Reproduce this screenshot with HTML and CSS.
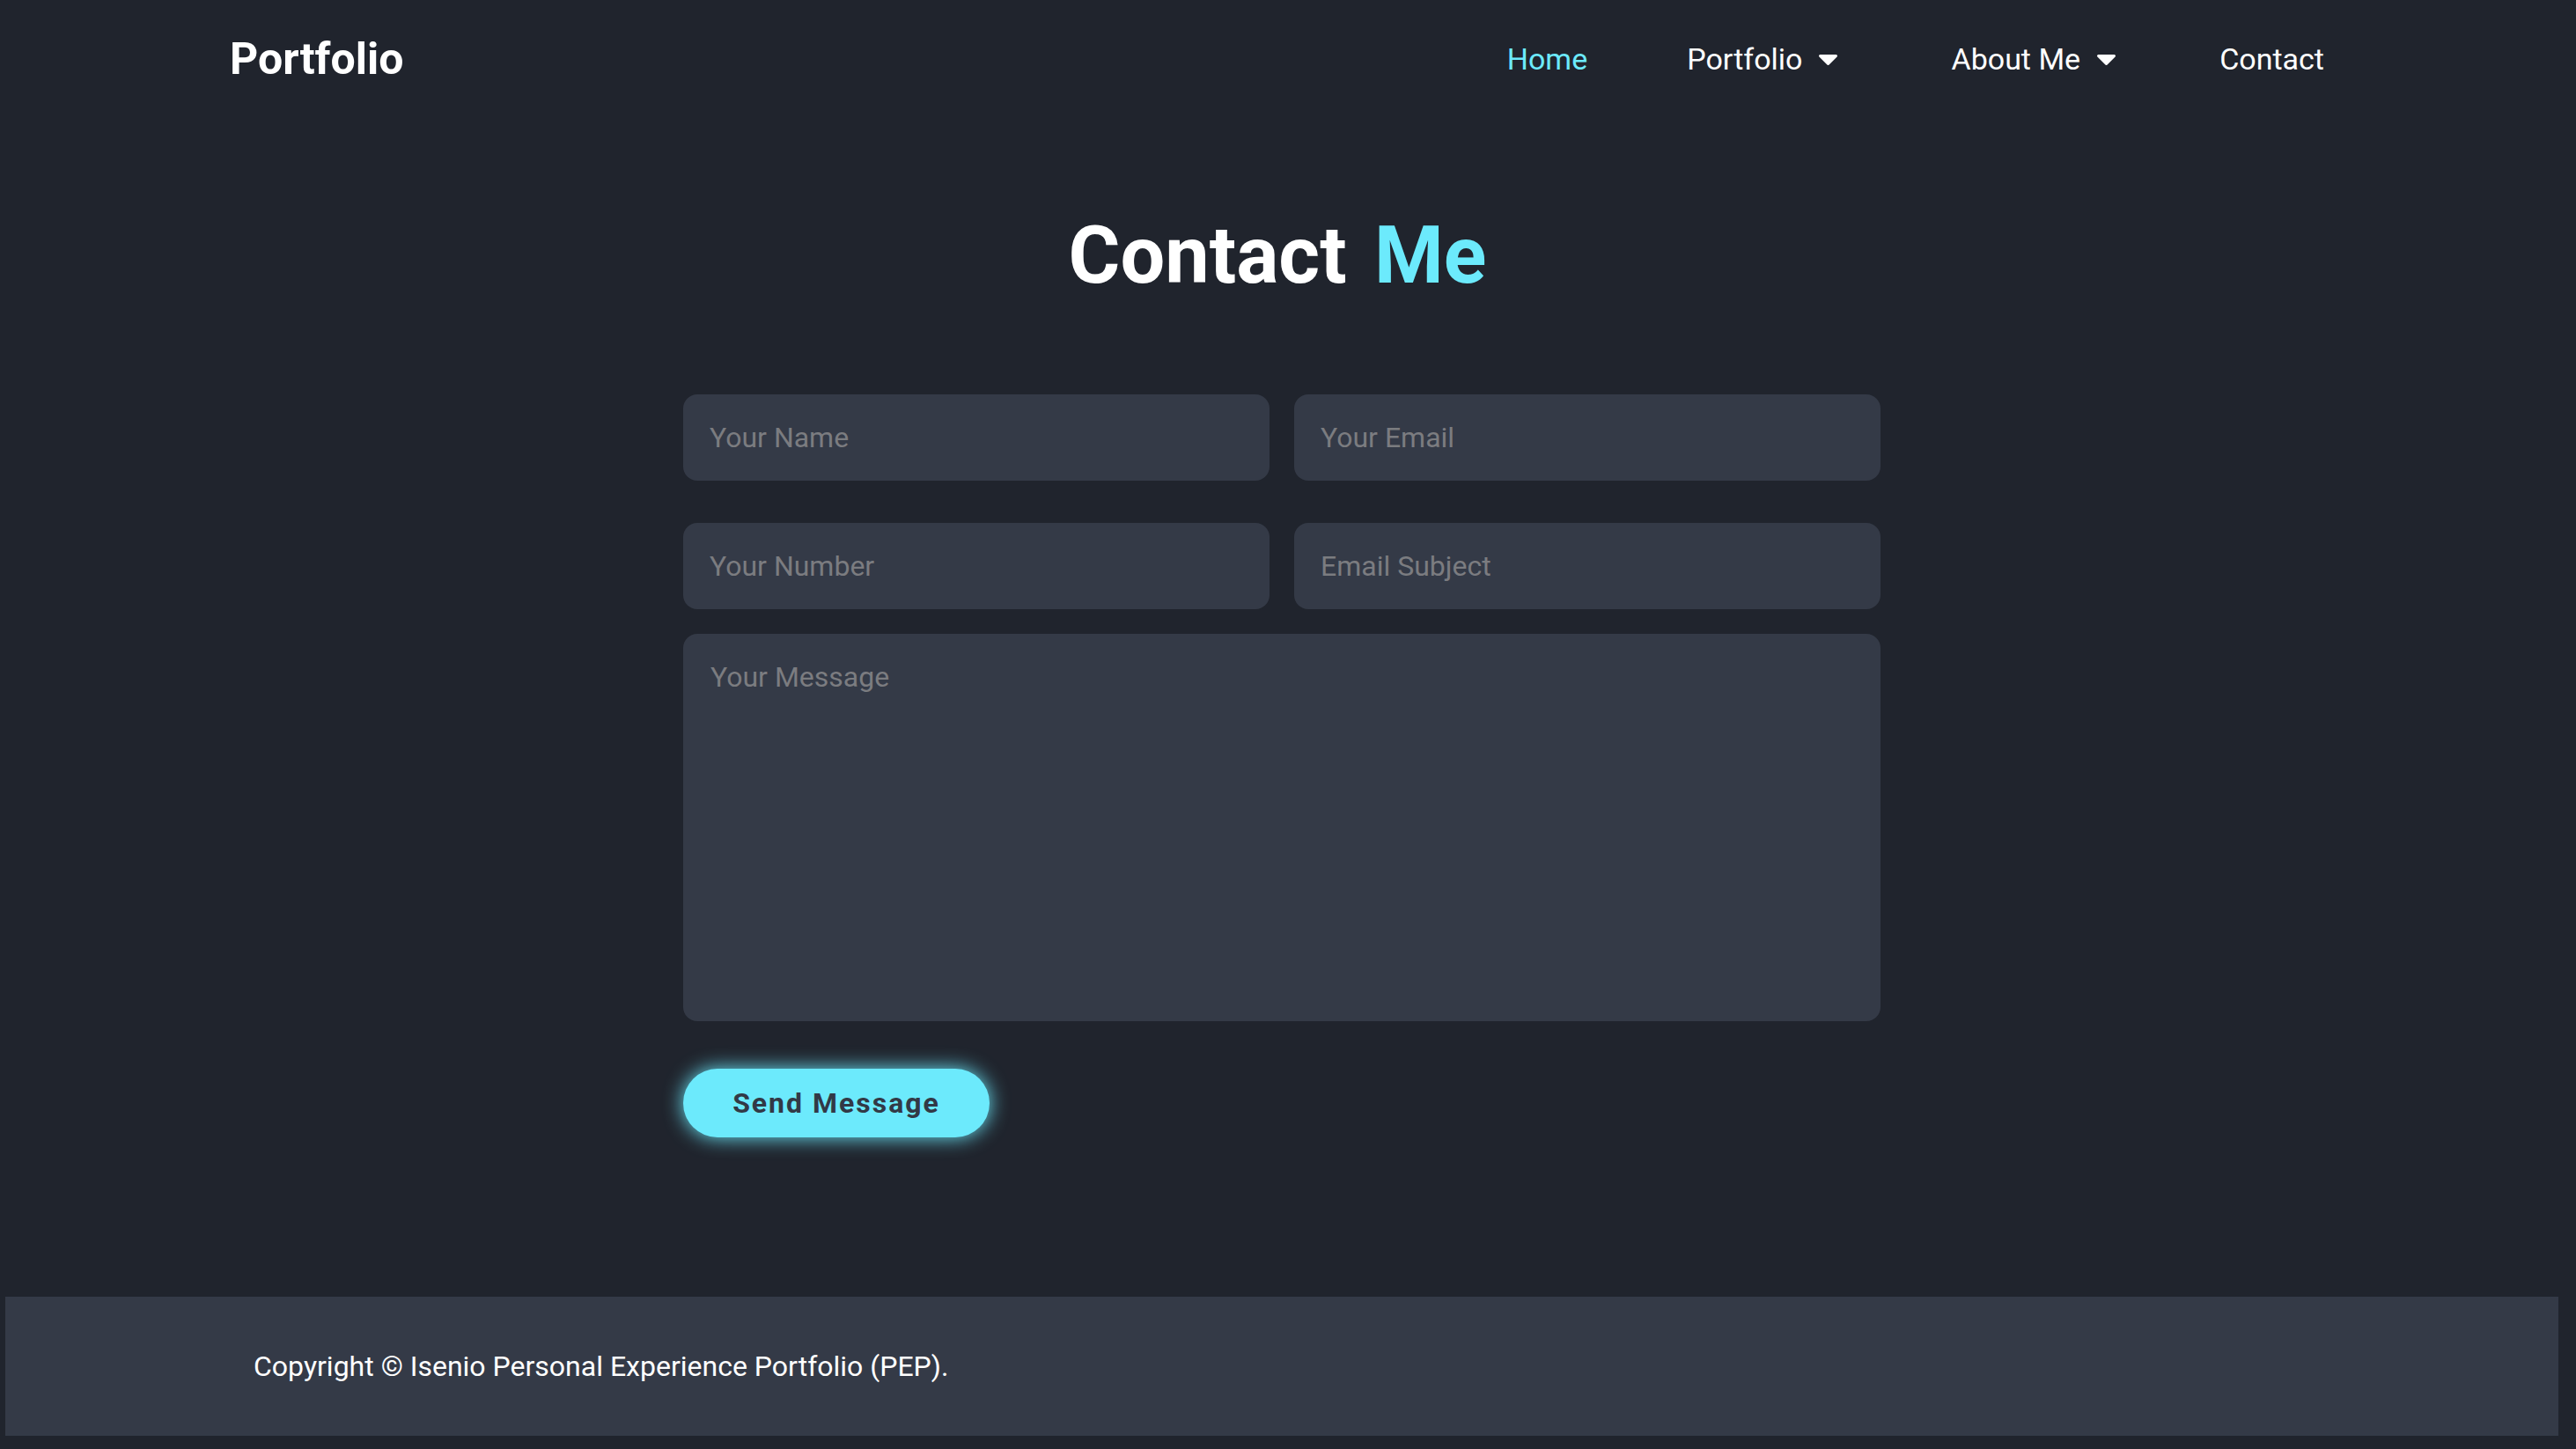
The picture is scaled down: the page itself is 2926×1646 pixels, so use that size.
FILE: index.html
```html
<!DOCTYPE html>
<html lang="en">
<head>
    <meta charset="UTF-8">
    <meta name="viewport" content="width=device-width, initial-scale=1.0">
    <title>Portfolio - Contact</title>
    <link rel="stylesheet" href="styles.css">
</head>
<body>
    <header class="header">
        <a href="#" class="logo">Portfolio</a>

        <nav class="navbar">
            <a href="#" class="nav-link active">Home</a>
            <a href="#" class="nav-link dropdown">Portfolio
                <svg class="caret" viewBox="0 0 21 12"><path d="M1.5 0h18a1.5 1.5 0 0 1 1.1 2.5l-9 9a1.5 1.5 0 0 1-2.2 0l-9-9A1.5 1.5 0 0 1 1.5 0z"/></svg>
            </a>
            <a href="#" class="nav-link dropdown">About Me
                <svg class="caret" viewBox="0 0 21 12"><path d="M1.5 0h18a1.5 1.5 0 0 1 1.1 2.5l-9 9a1.5 1.5 0 0 1-2.2 0l-9-9A1.5 1.5 0 0 1 1.5 0z"/></svg>
            </a>
            <a href="#" class="nav-link last">Contact</a>
        </nav>
    </header>

    <main class="contact">
        <h2 class="heading">Contact <span>Me</span></h2>

        <form action="#" class="contact-form">
            <div class="input-box first">
                <input type="text" placeholder="Your Name">
                <input type="email" placeholder="Your Email">
            </div>
            <div class="input-box">
                <input type="number" placeholder="Your Number">
                <input type="text" placeholder="Email Subject">
            </div>
            <textarea cols="30" rows="10" placeholder="Your Message"></textarea>

            <button type="submit" class="btn">Send Message</button>
        </form>
    </main>

    <footer class="footer">
        <p>Copyright &copy; Isenio Personal Experience Portfolio (PEP).</p>
    </footer>
</body>
</html>
```

FILE: styles.css
```css
* {
    box-sizing: border-box;
}

body {
    font-family: 'Roboto', 'Liberation Sans', sans-serif;
    margin: 0;
    padding: 0 20px 15px 6px;
    background-color: #20242d;  /* dark background */
    color: #fff;
    min-height: 100vh;
    display: flex;
    flex-direction: column;
}

a {
    text-decoration: none;
    color: #fff;
}

.header {
    display: flex;
    align-items: center;
    justify-content: space-between;
    padding: 38px 266px 0 255px;
}

.logo {
    font-size: 50px;
    font-weight: 700;
}

.navbar {
    display: flex;
    align-items: center;
}

.nav-link {
    font-size: 34px;
    display: flex;
    align-items: center;
    margin-left: 113px;
}

.nav-link:first-child {
    margin-left: 0;
}

.nav-link.last {
    margin-left: 102px;
}

.nav-link.active {
    color: #6ceafc;  /* main cyan */
}

.dropdown {
    padding-right: 16px;
}

.caret {
    width: 21px;
    height: 12px;
    margin-left: 19px;
    margin-top: 2px;
    fill: #fff;
}

.contact {
    flex: 1;
}

.heading {
    font-size: 90px;
    font-weight: 700;
    text-align: center;
    margin: 142px 0 105px;
    padding-right: 10px;
    line-height: normal;
}

.heading span {
    color: #6ceafc;
    margin-left: 9px;
}

.contact-form {
    width: 1360px;
    margin: 0 auto;
}

.input-box {
    display: flex;
    justify-content: space-between;
    margin-bottom: 28px;
}

.input-box.first {
    margin-bottom: 48px;
}

.input-box input,
.contact-form textarea {
    width: 666px;
    height: 98px;
    padding: 0 30px;
    font-family: inherit;
    font-size: 32px;
    color: #fff;
    background-color: #343a47;
    border: none;
    border-radius: 16px;
    outline: none;
}

.contact-form textarea {
    display: block;
    width: 100%;
    height: 440px;
    padding: 30px 31px;
    resize: none;
}

.contact-form ::placeholder {
    color: #7b7c80;
}

.btn {
    display: block;
    width: 348px;
    height: 78px;
    margin-top: 54px;
    border: none;
    border-radius: 39px;
    background-color: #6ceafc;
    box-shadow: 0 0 22px #6ceafc;
    color: #323946;
    font-family: inherit;
    font-size: 32px;
    font-weight: 700;
    letter-spacing: 2px;
    cursor: pointer;
}

.footer {
    height: 158px;
    margin-top: 180px;
    display: flex;
    align-items: center;
    padding-left: 282px;
    background-color: #343a47;
}

.footer p {
    margin: 0;
    font-size: 32px;
}
```
